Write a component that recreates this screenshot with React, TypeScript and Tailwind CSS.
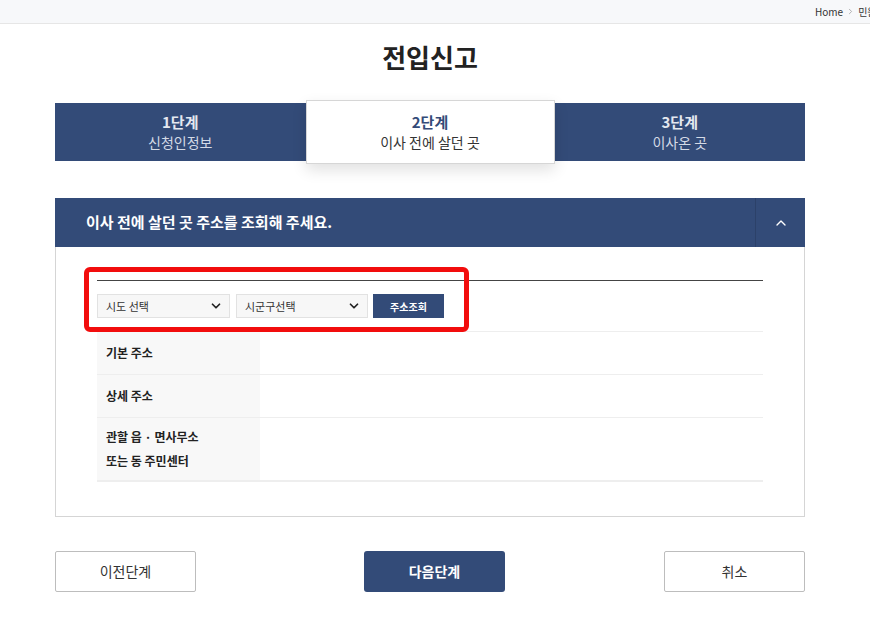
import { ChevronDown, ChevronUp, ChevronRight } from 'lucide-react';

const NAVY = 'bg-[#334b78]';

const STEPS = [
  { no: '1단계', name: '신청인정보' },
  { no: '2단계', name: '이사 전에 살던 곳' },
  { no: '3단계', name: '이사온 곳' },
];

function Select({ label, width }: { label: string; width: string }) {
  return (
    <div
      className={`${width} h-[24px] flex items-center justify-between pl-[8px] pr-[6px] bg-[#f7f7f7] border border-[#e2e2e2] text-[11px] text-[#333]`}
    >
      <span>{label}</span>
      <ChevronDown size={14} strokeWidth={3} className="text-[#222]" />
    </div>
  );
}

export default function App() {
  return (
    <div className="w-[870px] h-[621px] overflow-hidden bg-white font-['Noto_Sans_CJK_KR','Noto_Sans',sans-serif] text-[#222]">
      <div className="h-[24px] bg-[#f7f8fa] border-b border-[#e6e6e6] flex items-center pl-[815px] whitespace-nowrap overflow-hidden text-[10px] text-[#333]">
        <span className="shrink-0">Home</span>
        <ChevronRight size={9} className="shrink-0 mx-[3px] text-[#999]" />
        <span className="shrink-0">민원</span>
      </div>

      <div className="ml-[55px] w-[750px]">
        <h1 className="pt-[16px] h-[76px] text-center text-[26px] font-bold leading-[34px] text-[#222]">전입신고</h1>

        <div className="relative flex h-[58px] mt-[3px]">
          {STEPS.map((s, i) =>
            i === 1 ? (
              <div
                key={s.no}
                className="w-[249px] -my-[3px] z-10 flex flex-col items-center justify-center bg-white border border-[#d6d6d6] shadow-[0_6px_14px_rgba(0,0,0,0.12)]"
              >
                <span className="text-[15px] font-bold leading-[20px] text-[#334b78]">{s.no}</span>
                <span className="text-[14px] leading-[20px] text-[#333]">{s.name}</span>
              </div>
            ) : (
              <div key={s.no} className={`flex-1 flex flex-col items-center justify-center ${NAVY}`}>
                <span className="text-[15px] font-bold leading-[20px] text-[#e4e8f0]">{s.no}</span>
                <span className="text-[14px] leading-[20px] text-[#d4dae6]">{s.name}</span>
              </div>
            )
          )}
        </div>

        <div className="mt-[37px] border border-[#d5d5d5]">
          <div className={`h-[49px] flex items-center ${NAVY} -m-px`}>
            <span className="flex-1 pl-[31px] text-[15px] font-bold text-white">
              이사 전에 살던 곳 주소를 조회해 주세요.
            </span>
            <div className="w-[50px] h-full flex items-center justify-center border-l border-[#2c4169]">
              <ChevronUp size={16} strokeWidth={2} className="text-white" />
            </div>
          </div>

          <div className="relative pt-[34px] pb-[34px] px-[41px]">
            <div className="border-t border-[#444]" />
            <div className="flex items-center gap-[6px] h-[51px] border-b border-[#eee]">
              <Select label="시도 선택" width="w-[133px]" />
              <Select label="시군구선택" width="w-[132px]" />
              <div className={`w-[71px] h-[24px] -ml-[1px] flex items-center justify-center ${NAVY} text-[10px] font-bold text-white`}>
                주소조회
              </div>
            </div>
            <div className="flex h-[43px] border-b border-[#eee]">
              <div className="w-[163px] bg-[#f8f8f8] flex items-center pl-[9px] text-[12px] font-bold text-[#222]">기본 주소</div>
              <div className="flex-1" />
            </div>
            <div className="flex h-[43px] border-b border-[#eee]">
              <div className="w-[163px] bg-[#f8f8f8] flex items-center pl-[9px] text-[12px] font-bold text-[#222]">상세 주소</div>
              <div className="flex-1" />
            </div>
            <div className="flex h-[64px] border-b-2 border-[#eee]">
              <div className="w-[163px] bg-[#f8f8f8] flex flex-col justify-center pl-[9px] text-[12px] font-bold leading-[24px] text-[#222]">
                <span>관할 읍 · 면사무소</span>
                <span>또는 동 주민센터</span>
              </div>
              <div className="flex-1" />
            </div>

            <div className="absolute left-[28px] top-[21px] w-[385px] h-[65px] border-[5px] border-[#f20d0d] rounded-[6px] pointer-events-none" />
          </div>
        </div>

        <div className="mt-[34px] flex">
          <button className="w-[141px] h-[41px] bg-white border border-[#bdbdbd] rounded-[2px] text-[14px] text-[#333]">이전단계</button>
          <button className={`ml-[168px] w-[141px] h-[41px] ${NAVY} rounded-[3px] text-[14px] font-bold text-white`}>다음단계</button>
          <button className="ml-auto w-[141px] h-[41px] bg-white border border-[#bdbdbd] rounded-[2px] text-[14px] text-[#333]">취소</button>
        </div>
      </div>
    </div>
  );
}
